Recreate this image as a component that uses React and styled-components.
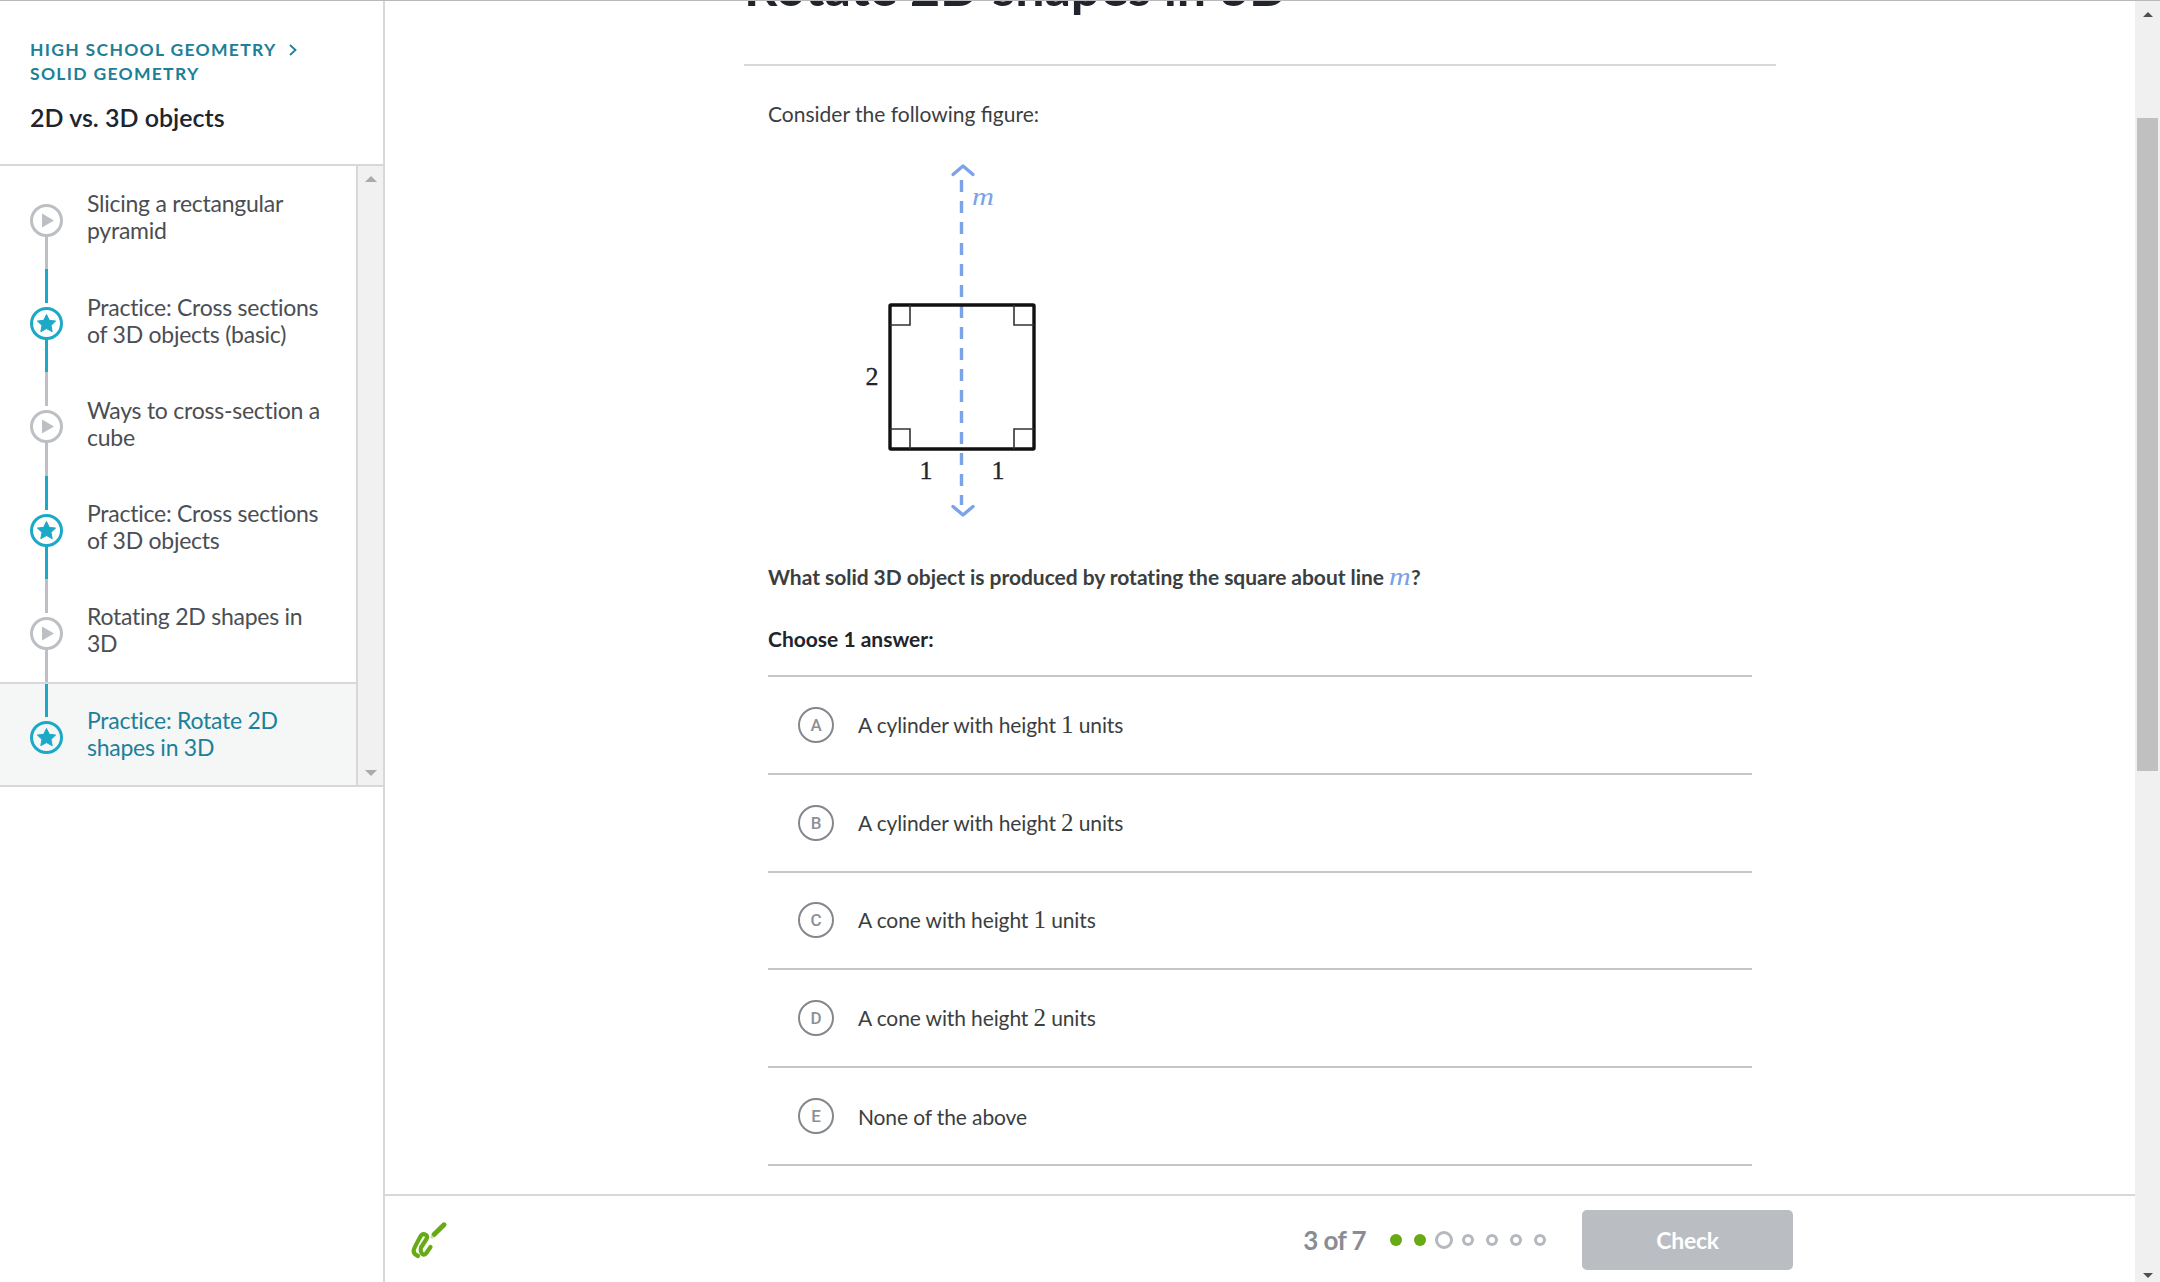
import React from "react";
import styled, { createGlobalStyle } from "styled-components";

const Global = createGlobalStyle`
  html, body { margin: 0; padding: 0; background: #fff; overflow: hidden; }
  * { box-sizing: border-box; }
  body { font-family: Lato, "Open Sans", sans-serif; color: #3b3e40; }
`;

const Page = styled.div`
  display: flex;
  width: 2160px;
  height: 1282px;
  border-top: 1px solid #b9b9b9;
  overflow: hidden;
`;

const Sidebar = styled.aside`
  width: 385px;
  flex: none;
  border-right: 2px solid #d6d8da;
  display: flex;
  flex-direction: column;
`;

const SideHeader = styled.header`
  height: 165px;
  padding: 37px 30px 0;
  border-bottom: 2px solid #d6d8da;
`;

const Crumb = styled.div`
  font-size: 17.5px;
  line-height: 24px;
  font-weight: 700;
  letter-spacing: 1.3px;
  text-transform: uppercase;
  color: #1c8099;
  white-space: nowrap;
`;

const CrumbChevron = styled.svg`
  width: 10px;
  height: 14px;
  margin-left: 11px;
  vertical-align: -1px;
`;

const SideTitle = styled.h2`
  margin: 16px 0 0;
  font-size: 25px;
  line-height: 30px;
  font-weight: 600;
  color: #21242c;
`;

const ListWrap = styled.div`
  display: flex;
  height: 621px;
  border-bottom: 2px solid #d6d8da;
`;

const List = styled.ul`
  list-style: none;
  margin: 0;
  padding: 0;
  width: 358px;
  flex: none;
  border-right: 2px solid #d6d8da;
`;

const Row = styled.li`
  display: flex;
  height: ${(p) => (p.$active ? "103px" : "103.2px")};
  padding-left: 30px;
  background: ${(p) => (p.$active ? "#f5f7f7" : "#fff")};
  border-top: ${(p) => (p.$active ? "2px solid #d6d8da" : "none")};
`;

const NodeColumn = styled.div`
  width: 32px;
  flex: none;
  display: flex;
  flex-direction: column;
  align-items: center;
`;

const SegmentTop = styled.div`
  height: ${(p) => (p.$active ? "33px" : "34px")};
  width: 3px;
  margin-bottom: 4px;
  background: ${(p) => (p.$hidden ? "transparent" : p.$color)};
`;

const SegmentBottom = styled.div`
  flex: 1;
  width: 3px;
  margin-top: -3px;
  background: ${(p) => (p.$hidden ? "transparent" : p.$color)};
`;

const NodeIcon = styled.svg`
  width: 33px;
  height: 33px;
  flex: none;
  position: relative;
`;

const RowLabel = styled.div`
  width: 240px;
  margin-left: 25px;
  padding-top: ${(p) => (p.$active ? "23.5px" : "24.4px")};
  font-size: 23px;
  line-height: 27px;
  letter-spacing: -0.25px;
  color: ${(p) => (p.$active ? "#1c8099" : "#4b4e52")};
`;

const SideScroll = styled.div`
  flex: 1;
  background: #f1f1f1;
  display: flex;
  flex-direction: column;
  align-items: center;
  justify-content: space-between;
  padding: 10px 0 9px;
`;

const Tri = styled.div`
  width: 0;
  height: 0;
  border-left: ${(p) => p.$w || 6}px solid transparent;
  border-right: ${(p) => p.$w || 6}px solid transparent;
  ${(p) =>
    p.$down
      ? `border-top: ${p.$w || 6}px solid ${p.$color};`
      : `border-bottom: ${p.$w || 6}px solid ${p.$color};`}
`;

const Main = styled.main`
  flex: 1;
  min-width: 0;
  display: flex;
  flex-direction: column;
`;

const ScrollArea = styled.div`
  flex: 1;
  min-height: 0;
  overflow: hidden;
`;

const Column = styled.div`
  width: 1032px;
  margin: 0 auto;
`;

const Title = styled.h1`
  margin: -45px 0 0;
  height: 110px;
  border-bottom: 2px solid #d6d8da;
  font-size: 52px;
  line-height: 60px;
  font-weight: 700;
  color: #21242c;
`;

const Exercise = styled.div`
  padding: 34px 24px 0;
`;

const Para = styled.p`
  margin: 0;
  font-size: 21px;
  line-height: 28px;
  color: #3b3e40;
`;

const Figure = styled.svg`
  display: block;
  width: 300px;
  height: 380px;
  margin-top: 22px;
`;

const Question = styled.p`
  margin: 33px 0 0;
  font-size: 21px;
  line-height: 28px;
  font-weight: 700;
  letter-spacing: -0.04px;
  color: #3b3e40;
`;

const MathVar = styled.span`
  display: inline-block;
  width: 22px;
  font-family: "Liberation Serif", serif;
  font-style: italic;
  font-weight: 400;
  font-size: 25px;
  line-height: 20px;
  color: #7aa0e6;
  transform: scaleX(1.2);
  transform-origin: left;
`;

const MathNum = styled.span`
  font-family: "Liberation Serif", serif;
  font-size: 25px;
`;

const Prompt = styled.p`
  margin: 34px 0 0;
  padding-bottom: 22px;
  font-size: 21px;
  line-height: 28px;
  font-weight: 700;
  color: #21242c;
`;

const Choices = styled.ul`
  list-style: none;
  margin: 0;
  padding: 0;
  border-top: 2px solid #c4c6c8;
`;

const Choice = styled.li`
  display: flex;
  align-items: center;
  height: 97.8px;
  padding-left: 30px;
  border-bottom: 2px solid #c4c6c8;
  font-size: 21px;
  letter-spacing: -0.12px;
  color: #3b3e40;
`;

const Letter = styled.span`
  width: 36px;
  height: 36px;
  flex: none;
  border: 2.5px solid #84888d;
  border-radius: 50%;
  display: flex;
  align-items: center;
  justify-content: center;
  margin-right: 24px;
  font-family: Roboto, "Liberation Sans", sans-serif;
  font-size: 17px;
  font-weight: 500;
  color: #8c9095;
`;

const Footer = styled.footer`
  height: 88px;
  flex: none;
  border-top: 2px solid #d6d8da;
  background: #fff;
  display: flex;
  align-items: center;
  padding: 0 342px 0 25px;
`;

const Scribble = styled.svg`
  width: 40px;
  height: 40px;
  margin-top: 2px;
`;

const Progress = styled.div`
  margin-left: auto;
  display: flex;
  align-items: center;
  margin-top: 2px;
`;

const Count = styled.span`
  font-size: 26px;
  font-weight: 700;
  letter-spacing: -0.6px;
  color: #888d93;
  margin-right: 18px;
`;

const Dots = styled.div`
  display: flex;
  align-items: center;
  margin-right: 30px;
`;

const DotCell = styled.span`
  width: 24px;
  display: flex;
  justify-content: center;
`;

const Dot = styled.span`
  flex: none;
  border-radius: 50%;
  ${(p) =>
    p.$state === "done"
      ? "width: 12px; height: 12px; background: #67ab14;"
      : p.$state === "current"
      ? "width: 18px; height: 18px; border: 3px solid #b5b8bc;"
      : "width: 12px; height: 12px; border: 3px solid #b5b8bc;"}
`;

const CheckButton = styled.button`
  width: 211px;
  height: 60px;
  border: none;
  border-radius: 5px;
  background: #babdc2;
  color: #fff;
  font-family: Lato, sans-serif;
  font-size: 23px;
  font-weight: 700;
  letter-spacing: -0.3px;
`;

const PageScroll = styled.div`
  width: 25px;
  flex: none;
  background: #f0f0f0;
  display: flex;
  flex-direction: column;
  align-items: center;
  padding: 11px 0 4px;
`;

const Thumb = styled.div`
  width: 21px;
  height: 653px;
  margin-top: 101px;
  margin-bottom: auto;
  background: #c0c0c0;
`;

const GRAY = "#bcbfc3";
const BLUE = "#1ca8c7";

const PlayNode = ({ bg = "#fff" }) => (
  <NodeIcon viewBox="0 0 33 33">
    <circle cx="16.5" cy="16.5" r="15" fill={bg} stroke={GRAY} strokeWidth="3" />
    <path d="M12 9.5 L24 16.5 L12 23.5 Z" fill={GRAY} />
  </NodeIcon>
);

const StarNode = ({ bg = "#fff" }) => (
  <NodeIcon viewBox="0 0 33 33">
    <circle cx="16.5" cy="16.5" r="15" fill={bg} stroke={BLUE} strokeWidth="3" />
    <path
      d="M16.5 7.5 L19.3 13.3 L25.6 14.1 L21 18.4 L22.2 24.7 L16.5 21.6 L10.8 24.7 L12 18.4 L7.4 14.1 L13.7 13.3 Z"
      fill={BLUE}
      stroke={BLUE}
      strokeWidth="1"
      strokeLinejoin="round"
    />
  </NodeIcon>
);

const lessons = [
  { kind: "play", lines: "Slicing a rectangular pyramid" },
  { kind: "star", lines: "Practice: Cross sections of 3D objects (basic)" },
  { kind: "play", lines: "Ways to cross-section a cube" },
  { kind: "star", lines: "Practice: Cross sections of 3D objects" },
  { kind: "play", lines: "Rotating 2D shapes in 3D" },
  { kind: "star", lines: "Practice: Rotate 2D shapes in 3D", active: true },
];

const choices = [
  ["A", <>A cylinder with height <MathNum>1</MathNum> units</>],
  ["B", <>A cylinder with height <MathNum>2</MathNum> units</>],
  ["C", <>A cone with height <MathNum>1</MathNum> units</>],
  ["D", <>A cone with height <MathNum>2</MathNum> units</>],
  ["E", <>None of the above</>],
];

const dots = ["done", "done", "current", "todo", "todo", "todo", "todo"];

const SquareFigure = () => (
  <Figure viewBox="768 150 300 380">
    <g fill="none" stroke="#7aa3e8" strokeWidth="3.4">
      <path d="M961.5 180 V505" strokeDasharray="12 9" />
      <path d="M953 174.5 L963 166 L973 174.5" strokeLinecap="round" strokeLinejoin="round" />
      <path d="M953 506.5 L963 515 L973 506.5" strokeLinecap="round" strokeLinejoin="round" />
    </g>
    <rect x="890" y="305" width="144" height="144" rx="1" fill="none" stroke="#111" strokeWidth="3.4" strokeLinejoin="round" />
    <path
      d="M890 325 H910 V305 M1014 305 V325 H1034 M890 429 H910 V449 M1014 449 V429 H1034"
      fill="none"
      stroke="#333"
      strokeWidth="1.6"
    />
    <g fontFamily="'Liberation Serif', serif" fontSize="26" fill="#21242c" textAnchor="middle" stroke="#21242c" strokeWidth="0.3">
      <text x="872" y="385">2</text>
      <text x="926" y="479">1</text>
      <text x="998" y="479">1</text>
    </g>
    <text
      x="972"
      y="205"
      fontFamily="'Liberation Serif', serif"
      fontStyle="italic"
      fontSize="26"
      fill="#7aa3e8"
      textLength="22"
      lengthAdjust="spacingAndGlyphs"
    >
      m
    </text>
  </Figure>
);

export default function App() {
  return (
    <>
      <Global />
      <Page>
        <Sidebar>
          <SideHeader>
            <Crumb>
              High school geometry
              <CrumbChevron viewBox="0 0 10 14">
                <path d="M2 2 L7.5 7 L2 12" fill="none" stroke="#1c8099" strokeWidth="1.8" />
              </CrumbChevron>
            </Crumb>
            <Crumb>Solid geometry</Crumb>
            <SideTitle>2D vs. 3D objects</SideTitle>
          </SideHeader>
          <ListWrap>
            <List>
              {lessons.map((l, i) => {
                const color = l.kind === "star" ? BLUE : GRAY;
                const bg = l.active ? "#f5f7f7" : "#fff";
                return (
                  <Row key={l.lines} $active={l.active}>
                    <NodeColumn>
                      <SegmentTop $hidden={i === 0} $color={color} $active={l.active} />
                      {l.kind === "star" ? <StarNode bg={bg} /> : <PlayNode bg={bg} />}
                      <SegmentBottom $hidden={i === lessons.length - 1} $color={color} />
                    </NodeColumn>
                    <RowLabel $active={l.active}>{l.lines}</RowLabel>
                  </Row>
                );
              })}
            </List>
            <SideScroll>
              <Tri $color="#aaaaaa" />
              <Tri $down $color="#aaaaaa" />
            </SideScroll>
          </ListWrap>
        </Sidebar>

        <Main>
          <ScrollArea>
            <Column>
              <Title>Rotate 2D shapes in 3D</Title>
              <Exercise>
                <Para>Consider the following figure:</Para>
                <SquareFigure />
                <Question>
                  What solid 3D object is produced by rotating the square about line <MathVar>m</MathVar>?
                </Question>
                <Prompt>Choose 1 answer:</Prompt>
                <Choices>
                  {choices.map(([letter, text]) => (
                    <Choice key={letter}>
                      <Letter>{letter}</Letter>
                      <span>{text}</span>
                    </Choice>
                  ))}
                </Choices>
              </Exercise>
            </Column>
          </ScrollArea>
          <Footer>
            <Scribble viewBox="0 0 40 40">
              <path
                d="M8 36 Q3.5 34 3.6 30.5 Q4 28 11 15.5 Q13 13 16 15 Q18 16.5 16.5 19 L11 27.5 Q10 30 11.5 33 Q13.5 36 16 33.5 L20.5 27"
                fill="none"
                stroke="#67ab14"
                strokeWidth="4.2"
                strokeLinecap="round"
                strokeLinejoin="round"
              />
              <path d="M24 14.5 L34 4.8" fill="none" stroke="#67ab14" strokeWidth="5" strokeLinecap="round" />
              <circle cx="22" cy="17" r="1.5" fill="#c8d9a8" />
            </Scribble>
            <Progress>
              <Count>3 of 7</Count>
              <Dots>
                {dots.map((d, i) => (
                  <DotCell key={i}>
                    <Dot $state={d} />
                  </DotCell>
                ))}
              </Dots>
              <CheckButton>Check</CheckButton>
            </Progress>
          </Footer>
        </Main>

        <PageScroll>
          <Tri $w={5} $color="#505050" />
          <Thumb />
          <Tri $w={5} $down $color="#505050" />
        </PageScroll>
      </Page>
    </>
  );
}
